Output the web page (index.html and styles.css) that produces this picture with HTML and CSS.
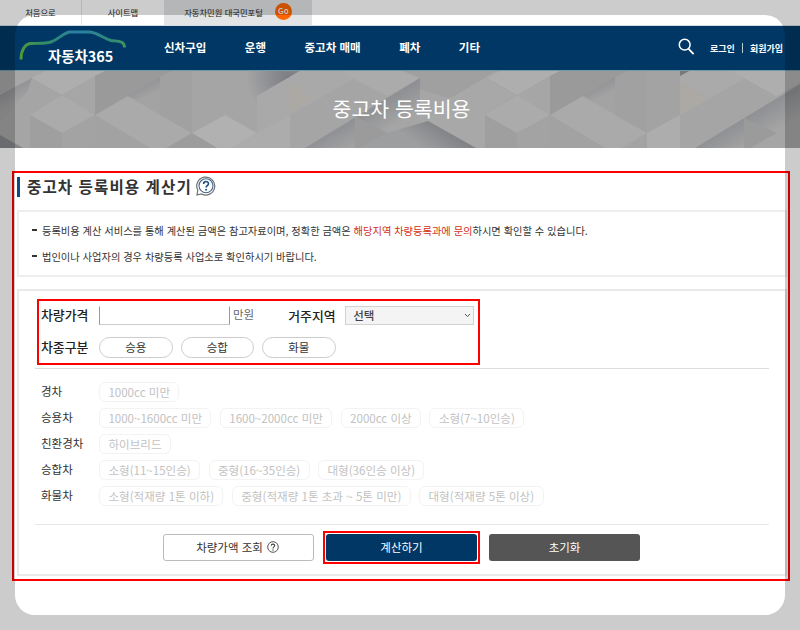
FILE: index.html
```
<!DOCTYPE html>
<html lang="ko">
<head>
    <meta charset="UTF-8">
    <meta name="viewport" content="width=device-width, initial-scale=1.0">
    <title>중고차 등록비용</title>
    <link rel="stylesheet" href="styles.css">
</head>
<body>
<div class="page">
    <!-- 상단 바 -->
    <div class="top-bar">
        <a class="top-link">처음으로</a>
        <a class="top-link">사이트맵</a>
        <a class="top-link portal">자동차민원 대국민포털 <span class="go">Go</span></a>
    </div>

    <!-- 메인 메뉴 -->
    <header class="header">
        <div class="logo">
            <svg class="logo-car" width="110" height="34" viewBox="0 0 110 34">
                <defs>
                    <linearGradient id="carLine" x1="0" x2="1">
                        <stop offset="0" stop-color="#4c9a3b"/>
                        <stop offset="0.25" stop-color="#2e8b6a"/>
                        <stop offset="0.55" stop-color="#2a7fa8"/>
                        <stop offset="0.85" stop-color="#2f8a78"/>
                        <stop offset="1" stop-color="#3f9560"/>
                    </linearGradient>
                </defs>
                <path d="M3 29.500C3 20 7 14.500 12 13.500C19 13 27 14 33 12C40 9.500 44 4 51 2L72 2C80 3 85 8 93 10.500C100 11.500 106.500 10.500 106.500 17.500" fill="none" stroke="url(#carLine)" stroke-width="2.900"/>
            </svg>
            <span class="logo-text">자동차365</span>
        </div>
        <nav class="menu">
            <a>신차구입</a>
            <a>운행</a>
            <a>중고차 매매</a>
            <a>폐차</a>
            <a>기타</a>
        </nav>
        <svg class="search" width="17" height="18" viewBox="0 0 17 18">
            <circle cx="6.700" cy="6.700" r="5.400" fill="none" stroke="#fff" stroke-width="1.500"/>
            <path d="M10.600 10.800L15.600 16.200" stroke="#fff" stroke-width="1.800"/>
        </svg>
        <div class="member"><a>로그인</a><i class="bar"></i><a>회원가입</a></div>
    </header>

    <!-- 타이틀 배너 -->
    <div class="banner">
        <svg class="banner-bg" width="800" height="77" viewBox="0 0 800 77">
            <defs>
                <linearGradient id="down" x1="0.200" y1="0" x2="0.600" y2="1">
                    <stop offset="0" stop-color="#85868a"/>
                    <stop offset="0.600" stop-color="#a3a3a4"/>
                </linearGradient>
                <radialGradient id="corner" gradientUnits="userSpaceOnUse" cx="288" cy="6" r="42">
                    <stop offset="0" stop-color="#7b7d82"/>
                    <stop offset="1" stop-color="#a5a5a6"/>
                </radialGradient>
                <linearGradient id="long" gradientUnits="userSpaceOnUse" x1="370" y1="32" x2="386" y2="60">
                    <stop offset="0" stop-color="#8a8c90"/>
                    <stop offset="1" stop-color="#a5a5a5"/>
                </linearGradient>
                <linearGradient id="shade" gradientUnits="userSpaceOnUse" x1="455" y1="64" x2="438" y2="88">
                    <stop offset="0" stop-color="#808286"/>
                    <stop offset="1" stop-color="#9d9e9f"/>
                </linearGradient>
                <g id="cube">
                    <path d="M-5 28L32 7L62 24L30 44L30 77L-5 77Z" fill="#a5a5a5"/>
                    <path d="M32 7L45 0L105 0L62 24Z" fill="#aeaeae"/>
                    <path d="M30 44L62 24L95 44L62 62Z" fill="#ababab"/>
                    <path d="M30 44L62 62V77H30Z" fill="#9f9f9f"/>
                    <path d="M62 62L95 44V77H62Z" fill="#a3a3a3"/>
                    <path d="M62 24L95 5V44Z" fill="#a6a6a6"/>
                    <path d="M95 5L105 0H180L95 46Z" fill="#9a9a9a"/>
                    <path d="M95 44L128 25L192 62L165 77H150Z" fill="#aaa"/>
                    <path d="M95 44L150 77H95Z" fill="#a2a2a2"/>
                    <path d="M128 25L160 6V44Z" fill="url(#down)"/>
                    <path d="M160 6L172 0H225V44L192 62L160 44Z" fill="#a1a1a1"/>
                    <path d="M192 0H225V44L192 62Z" fill="#a5a5a5"/>
                </g>
            </defs>
            <rect width="800" height="77" fill="#a6a6a6"/>
            <use href="#cube"/>
            <path d="M0 24L32 7L28 20L0 52Z" fill="url(#down)"/>
            <path d="M0 64L23 77H0Z" fill="#85868a"/>
            <path d="M225 0H300L257 25V62L225 44Z" fill="url(#corner)"/>
            <path d="M257 25L300 0H340L354 8L290 44L257 62Z" fill="#a9a9a9"/>
            <path d="M290 12L312 26L290 42Z" fill="#aca9a4"/>
            <path d="M192 62L225 44L257 62L232 77H217Z" fill="#b1b1b1"/>
            <path d="M192 62L217 77H167Z" fill="#9c9c9c"/>
            <path d="M257 62L290 44V77H232Z" fill="#acacac"/>
            <path d="M290 44L354 8L387 25L305 77H290Z" fill="#a5a5a5"/>
            <path d="M354 8L340 0H403L420 7L387 25Z" fill="#ababab"/>
            <path d="M305 77L420 7V77Z" fill="url(#long)"/>
            <path d="M355 45L387 62L360 77H355Z" fill="#9b9b9b"/>
            <path d="M420 7L403 0H495L452 28L420 18Z" fill="#a0a0a0"/>
            <use href="#cube" transform="translate(455 0)"/>
            <path d="M440 33L485 7L515 24L485 44V77H476L428 50Z" fill="#a8a8a8"/>
            <path d="M428 50L476 77H360L387 62Z" fill="url(#shade)"/>
            <path d="M647 62L680 44V0H647Z" fill="#a3a3a3"/>
            <path d="M647 62L625 77H647Z" fill="#a3a3a3"/>
            <path d="M647 62L680 44V77H647Z" fill="#adadad"/>
            <path d="M680 44L744 8L776 25L695 77H680Z" fill="#a5a5a5"/>
            <path d="M680 5L690 0H735L744 8L680 44Z" fill="#aaa"/>
            <path d="M680 11L709 26L680 43Z" fill="#aca9a4"/>
            <path d="M680 0H689L680 5Z" fill="#77797e"/>
            <path d="M732 0H800V12L776 25Z" fill="#aeaeae"/>
            <path d="M305 77L425 4V77Z" fill="url(#long)" transform="translate(390 0)"/>
            <path d="M744 47L777 62L750 77H744Z" fill="#9b9b9b"/>
        </svg>
        <h1 class="banner-title">중고차 등록비용</h1>
    </div>

    <!-- 계산기 -->
    <main class="calculator">
        <h2 class="title">중고차 등록비용 계산기
            <svg class="help" width="20" height="20" viewBox="0 0 20 20">
                <path d="M1 19L1.800 14.300A9 9 0 1 1 5.500 18Z" fill="#fff" stroke="#6d7175" stroke-width="1.200"/>
                <circle cx="10" cy="9.700" r="7" fill="#fff" stroke="#4a6788" stroke-width="1.100"/>
                <path d="M7.600 8C7.600 4.700 12.500 4.800 12.500 7.700C12.500 9.500 10.100 9.700 10.100 11.600" fill="none" stroke="#1f4f84" stroke-width="1.600"/>
                <circle cx="10.100" cy="13.800" r="1" fill="#1f4f84"/>
            </svg>
        </h2>
        <ul class="notice">
            <li>등록비용 계산 서비스를 통해 계산된 금액은 참고자료이며, 정확한 금액은 <em>해당지역 차량등록과에 문의</em>하시면 확인할 수 있습니다.</li>
            <li>법인이나 사업자의 경우 차량등록 사업소로 확인하시기 바랍니다.</li>
        </ul>
        <div class="panel">
            <div class="basic">
                <div class="field">
                    <label class="name">차량가격</label>
                    <input class="price" type="text">
                    <span class="unit">만원</span>
                    <label class="name region">거주지역</label>
                    <div class="select">선택
                        <svg width="7" height="5" viewBox="0 0 7 5"><path d="M1 1L3.500 3.600L6 1" fill="none" stroke="#555" stroke-width="1"/></svg>
                    </div>
                </div>
                <div class="field types">
                    <label class="name">차종구분</label>
                    <button class="pill">승용</button>
                    <button class="pill">승합</button>
                    <button class="pill">화물</button>
                </div>
            </div>
            <div class="options">
                <div class="row"><span class="kind">경차</span><span class="opt">1000cc 미만</span></div>
                <div class="row"><span class="kind">승용차</span><span class="opt">1000~1600cc 미만</span><span class="opt">1600~2000cc 미만</span><span class="opt">2000cc 이상</span><span class="opt">소형(7~10인승)</span></div>
                <div class="row"><span class="kind">친환경차</span><span class="opt">하이브리드</span></div>
                <div class="row"><span class="kind">승합차</span><span class="opt">소형(11~15인승)</span><span class="opt">중형(16~35인승)</span><span class="opt">대형(36인승 이상)</span></div>
                <div class="row"><span class="kind">화물차</span><span class="opt">소형(적재량 1톤 이하)</span><span class="opt">중형(적재량 1톤 초과 ~ 5톤 미만)</span><span class="opt">대형(적재량 5톤 이상)</span></div>
            </div>
            <div class="actions">
                <button class="btn lookup">차량가액 조회
                    <svg width="12" height="12" viewBox="0 0 12 12">
                        <circle cx="6" cy="6" r="5.300" fill="none" stroke="#555" stroke-width="1"/>
                        <path d="M4.300 4.800C4.300 2.500 7.700 2.600 7.700 4.600C7.700 5.800 6 5.900 6 7.400" fill="none" stroke="#444" stroke-width="1.100"/>
                        <circle cx="6" cy="9" r="0.700" fill="#444"/>
                    </svg>
                </button>
                <div class="mark"><button class="btn calc">계산하기</button></div>
                <button class="btn reset">초기화</button>
            </div>
        </div>
    </main>
    <div class="shade"></div>
</div>
</body>
</html>
```
FILE: styles.css
```
* {
    margin: 0;
    padding: 0;
    box-sizing: border-box;
}
body {
    font-family: "Noto Sans CJK KR", sans-serif;
    background-color: #fff;
    color: #333;
}
button, input {
    font-family: inherit;
}
.page {
    position: relative;
    width: 800px;
    height: 630px;
    overflow: hidden;
}
/* 화면 가장자리 음영 */
.shade {
    position: absolute;
    inset: 15px;
    border-radius: 20px;
    box-shadow: 0 0 0 60px rgba(0, 0, 0, 0.2);
    pointer-events: none;
}
/* 상단 바 */
.top-bar {
    display: flex;
    height: 26px;
    border-bottom: 1px solid #d3dce3;
}
.top-link {
    display: flex;
    align-items: center;
    justify-content: center;
    width: 82px;
    padding-bottom: 2px;
    border-right: 1px solid #e6e6e6;
    font-size: 8.3px;
    color: #222;
}
.top-link:nth-child(2) {
    border-right: none;
}
.top-link.portal {
    width: 148px;
    border-right: none;
    background: #e3e4e6;
    gap: 12px;
}
.go {
    width: 17px;
    height: 17px;
    border-radius: 50%;
    background: #f60;
    color: #fff;
    font-size: 8px;
    font-weight: 500;
    line-height: 16px;
    text-align: center;
}
/* 메인 메뉴 */
.header {
    display: flex;
    align-items: center;
    height: 45px;
    padding-left: 18px;
    background: #003764;
    border-bottom: 1px solid #6f9aa8;
    color: #fff;
}
.logo {
    width: 146px;
    height: 44px;
    padding-top: 4px;
}
.logo-car {
    display: block;
}
.logo-text {
    display: block;
    margin: -18px 0 0 30px;
    font-size: 14.4px;
    font-weight: 700;
    line-height: 20px;
}
.menu {
    display: flex;
    gap: 38.5px;
    font-size: 11.5px;
    font-weight: 700;
    line-height: 40px;
    padding-bottom: 2px;
}
.search {
    margin: -3px 15px 0 auto;
}
.member {
    display: flex;
    align-items: center;
    margin-right: 17px;
    font-size: 9px;
    font-weight: 700;
}
.bar {
    width: 1px;
    height: 10px;
    margin: 0 7px;
    background: #b7cccb;
}
/* 타이틀 배너 */
.banner {
    display: grid;
    height: 77px;
}
.banner-bg, .banner-title {
    grid-area: 1 / 1;
}
.banner-title {
    z-index: 1;
    padding-left: 3px;
    color: #fff;
    font-size: 20.5px;
    font-weight: 400;
    line-height: 74px;
    text-align: center;
}
/* 계산기 */
.calculator {
    width: 778px;
    height: 410px;
    margin: 23px 0 0 12px;
    padding: 4px 1px 0 3px;
    border: 2px solid #f00;
}
.title {
    display: flex;
    align-items: center;
    height: 20px;
    gap: 4px;
    padding: 0 0 2px 7px;
    border-left: 3px solid #0f4a80;
    font-size: 15.6px;
    letter-spacing: 1.05px;
}
.notice {
    height: 67px;
    margin-top: 13px;
    padding: 6px 0 0 13px;
    border: 2px solid #eee;
    list-style: none;
    font-size: 10.25px;
    line-height: 26px;
}
.notice li {
    display: flex;
    white-space: pre;
}
.notice li::before {
    content: "";
    width: 5px;
    height: 2px;
    margin: 11px 5px 0 0;
    background: #333;
}
.notice em {
    font-style: normal;
    color: #d22f20;
}
.panel {
    height: 287px;
    margin-top: 12px;
    padding: 8px 16px 0 17px;
    border: 2px solid #e9e9e9;
}
.basic {
    width: 443px;
    height: 66px;
    margin-left: 1px;
    padding: 4px 0 0 2px;
    border: 2px solid #f00;
}
.field {
    display: flex;
    align-items: center;
    height: 20px;
}
.name {
    width: 58px;
    margin-top: -2px;
    font-size: 12.9px;
    font-weight: 500;
    color: #222;
}
.price {
    width: 131px;
    height: 19px;
    border: 1px solid #999;
    border-top-color: #fff;
    border-bottom-color: #ccc;
}
.unit {
    margin: -2px 34px 0 3px;
    font-size: 11.5px;
    color: #666;
}
.region {
    width: 57px;
    margin-top: 0;
}
.select {
    display: flex;
    align-items: center;
    justify-content: space-between;
    width: 129px;
    height: 19px;
    padding: 0 2px 0 7px;
    border: 1px solid #d2d2d2;
    background: #f4f4f4;
    font-size: 11.5px;
    font-weight: 500;
    color: #444;
}
.types {
    margin-top: 12px;
}
.pill {
    width: 73.5px;
    height: 21px;
    margin-right: 8px;
    border: 1px solid #ccc;
    border-radius: 11px;
    background: #fff;
    font-size: 11.5px;
    line-height: 19px;
    color: #333;
}
.options {
    height: 157px;
    margin: 3px 0 0 -1px;
    padding: 10px 0 0 6px;
    border-top: 1px solid #ddd;
    border-bottom: 1px solid #e6e6e6;
}
.row {
    display: flex;
    align-items: center;
    height: 26px;
}
.kind {
    width: 58px;
    margin-top: -2px;
    font-size: 11.5px;
}
.opt {
    height: 20px;
    margin-right: 8.4px;
    padding: 0 8.4px;
    border: 1px solid #f3f3f3;
    border-radius: 6px;
    font-size: 11.55px;
    font-weight: 400;
    line-height: 19px;
    color: #c2c2c2;
    white-space: nowrap;
}
.actions {
    display: flex;
    align-items: center;
    margin: 6px 0 0 127px;
}
.btn {
    display: flex;
    align-items: center;
    justify-content: center;
    gap: 4px;
    width: 151px;
    height: 27px;
    padding-bottom: 1px;
    border: none;
    border-radius: 3px;
    font-size: 11.5px;
    color: #fff;
}
.lookup {
    padding-right: 2px;
    border: 1px solid #bbb;
    background: #fff;
    color: #333;
}
.mark {
    margin: 0 9px;
    padding: 1px;
    border: 2px solid #f00;
}
.calc {
    background: #003764;
}
.reset {
    background: #555;
}
```
